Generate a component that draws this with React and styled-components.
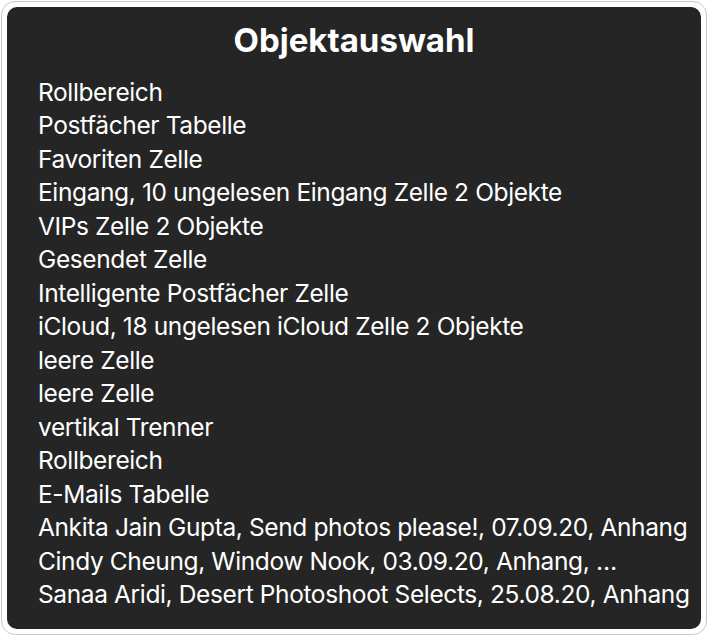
import React from 'react';
import styled, { createGlobalStyle } from 'styled-components';

const GlobalStyle = createGlobalStyle`
  html, body {
    margin: 0;
    padding: 0;
    background: #ffffff;
  }
  body {
    font-family: Inter, "Noto Sans", "Liberation Sans", sans-serif;
  }
`;

const Frame = styled.div`
  box-sizing: border-box;
  width: 706px;
  height: 634px;
  margin: 1px 0 0 1px;
  padding: 5px;
  border: 1px solid #c8c8c8;
  border-radius: 14px;
  background: #ffffff;
`;

const Panel = styled.div`
  box-sizing: border-box;
  height: 100%;
  background: #252525;
  border-radius: 10px;
  padding: 15px 0 0 31px;
  color: #ffffff;
`;

const Title = styled.h1`
  margin: 0 0 18px -31px;
  text-align: center;
  font-size: 33px;
  font-weight: 700;
  line-height: 36px;
  letter-spacing: 0;
`;

const List = styled.ul`
  list-style: none;
  margin: 0;
  padding: 0;
`;

const Item = styled.li`
  font-size: 24.5px;
  line-height: 33.47px;
  font-weight: 400;
  letter-spacing: -0.38px;
  white-space: nowrap;
`;

const items = [
  'Rollbereich',
  'Postfächer Tabelle',
  'Favoriten Zelle',
  'Eingang, 10 ungelesen Eingang Zelle 2 Objekte',
  'VIPs Zelle 2 Objekte',
  'Gesendet Zelle',
  'Intelligente Postfächer Zelle',
  'iCloud, 18 ungelesen iCloud Zelle 2 Objekte',
  'leere Zelle',
  'leere Zelle',
  'vertikal Trenner',
  'Rollbereich',
  'E-Mails Tabelle',
  'Ankita Jain Gupta, Send photos please!, 07.09.20, Anhang',
  'Cindy Cheung, Window Nook, 03.09.20, Anhang, …',
  'Sanaa Aridi, Desert Photoshoot Selects, 25.08.20, Anhang',
];

export default function App() {
  return (
    <>
      <GlobalStyle />
      <Frame>
        <Panel>
          <Title>Objektauswahl</Title>
          <List>
            {items.map((text, i) => (
              <Item key={i}>{text}</Item>
            ))}
          </List>
        </Panel>
      </Frame>
    </>
  );
}
